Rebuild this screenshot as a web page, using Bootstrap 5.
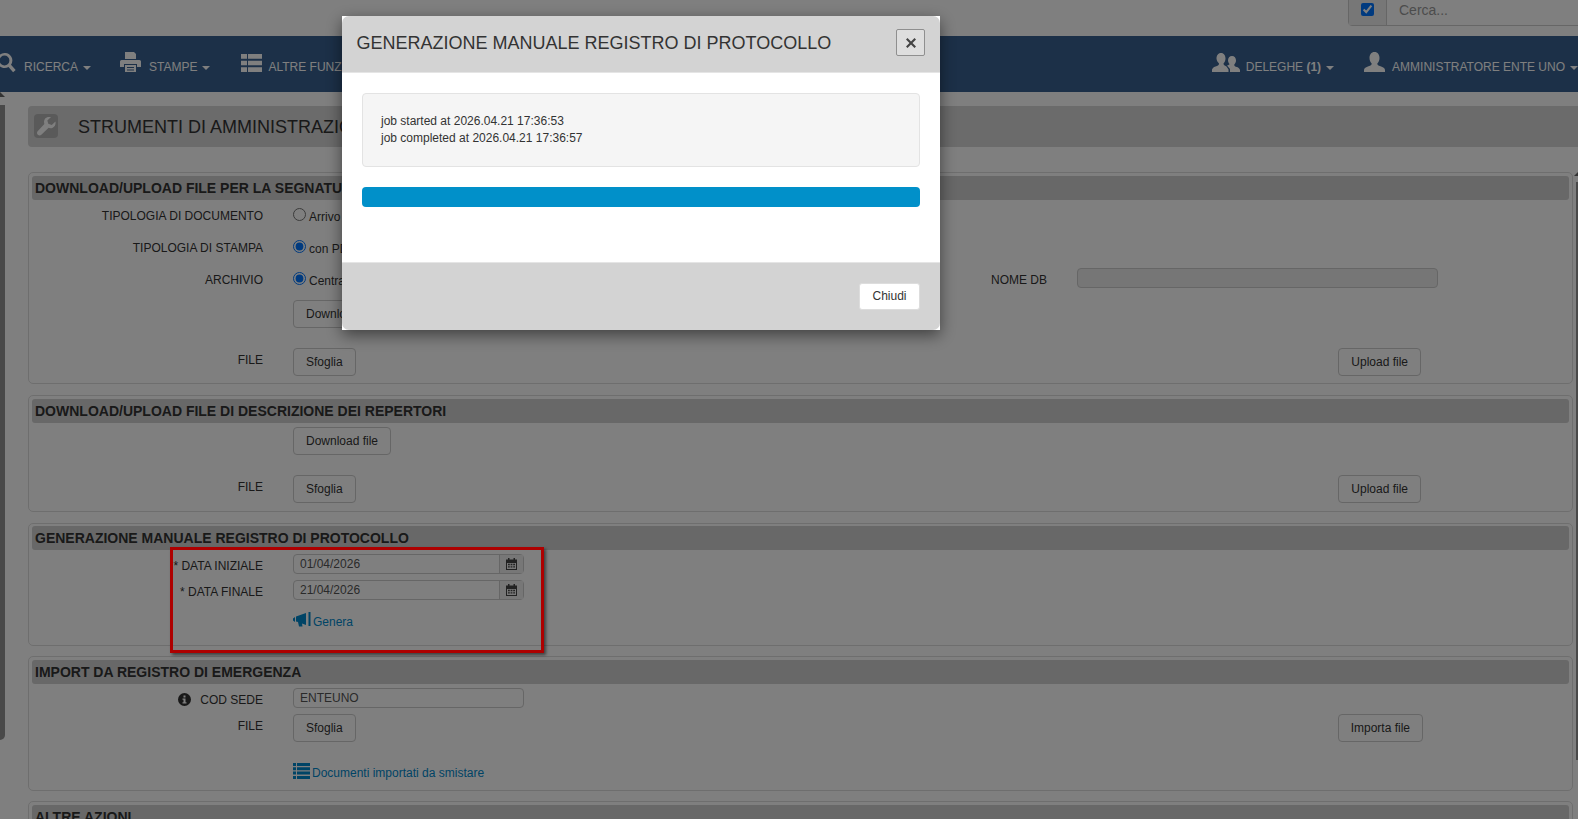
<!DOCTYPE html>
<html lang="it">
<head>
  <meta charset="UTF-8">
  <title>Strumenti di amministrazione</title>
  <link href="https://cdn.jsdelivr.net/npm/bootstrap@5.3.0/dist/css/bootstrap.min.css" rel="stylesheet">
  <style>
    html, body { height: 819px; overflow: hidden; }
    body { font-family: "Liberation Sans", Arial, sans-serif; font-size: 12px; line-height: 17px; color: #333; background: #fff; }
    svg { fill: currentColor; display: block; flex-shrink: 0; }

    /* top strip */
    .top-strip { height: 36px; }
    .search-box { width: 240px; height: 27px; margin-top: -1px; margin-right: -10px; border: 1px solid #ccc; border-radius: 0 0 0 4px; flex-shrink: 0; }
    .search-check { width: 38px; background: #eee; border-right: 1px solid #ccc; padding-top: 3px; padding-left: 12px; }
    .search-check input { width: 13px; height: 13px; margin: 0; display: block; }
    .search-text { padding: 0 0 0 12px; font-size: 14px; line-height: 20px; color: #999; }

    /* blue bar */
    .main-bar { height: 56px; background: #386090; color: #fff; padding: 0; flex-wrap: nowrap; }
    .bar-left { margin-left: -3px; }
    .bar-item { display: flex; align-items: flex-start; color: #fff; white-space: nowrap; padding-top: 16px; margin-right: 29px; }
    .bar-item:last-child { margin-right: 0; }
    .bar-item span { margin-top: 7px; }
    .bar-item svg { margin-right: 8px; }
    .gap-six { margin-left: 2px; }
    .gap-six svg { margin-right: 6px; margin-top: 2px; }
    .gap-five { margin-right: 30px; }
    .gap-five svg { margin-right: 6px; margin-top: 1px; }
    .gap-seven svg { margin-right: 7px; }
    .icon-low svg { margin-top: 1px; }
    .bar-caret { width: 0; height: 0; margin: 14px 0 0 5px; border-top: 4px solid #fff; border-left: 4px solid transparent; border-right: 4px solid transparent; }

    /* page */
    .left-rail { width: 5px; height: 635px; margin-top: 13px; margin-right: 23px; background: #929292; border-radius: 0 0 5px 0; flex-shrink: 0; position: relative; }
    .left-rail::before { content: ""; position: absolute; left: 0; top: -13px; border-bottom: 5px solid #666; border-right: 5px solid transparent; }
    .right-rail { position: absolute; right: 0; top: 182px; width: 2px; height: 578px; background: #929292; }
    .right-rail::before { content: ""; position: absolute; right: 0; top: -10px; border-bottom: 4px solid #666; border-left: 4px solid transparent; }
    .page-head { height: 41px; margin-top: 14px; margin-bottom: 25px; background: #d6d6d6; border-radius: 4px 0 0 4px; padding-left: 6px; font-size: 18px; color: #333; }
    .page-head span { margin-top: 1px; }
    .wrench-box { width: 24px; height: 24px; background: #b4b4b4; border-radius: 4px; color: #fff; margin-right: 20px; margin-top: -1px; }
    .field-box { margin: 0 5px 11px 0; padding: 3px; border: 1px solid #ddd; border-radius: 5px; }
    .box-segn { height: 212px; }
    .box-rep { height: 117px; }
    .box-gen { height: 123px; padding-top: 2px; margin-bottom: 10px; }
    .box-imp { height: 135px; margin-bottom: 10px; }
    .field-title { height: 24px; line-height: 24px; padding-left: 3px; background: #d0d0d0; border-radius: 3px; font-size: 14px; font-weight: 700; color: #333; margin-bottom: 4px; }
    .box-segn .field-title { margin-bottom: 6px; }
    .form-line { display: flex; align-items: flex-start; }
    .line-32 { height: 32px; }
    .line-18 { height: 18px; }
    .line-26 { height: 26px; }
    .line-49 { height: 49px; }
    .line-48 { height: 48px; }
    .line-60 { height: 60px; padding-top: 12px; }
    .line-label { width: 231px; text-align: right; margin-right: 30px; flex-shrink: 0; padding-top: 2px; display: flex; justify-content: flex-end; }
    .label-low { padding-top: 4px; }
    .label-db { width: 120px; }
    .plain-btn { display: inline-block; height: 28px; padding: 4px 12px; font-size: 12px; line-height: 18px; color: #333; background: transparent; border: 1px solid #ccc; border-radius: 4px; }
    .btn-far { margin-left: auto; margin-right: 148px; }
    .btn-far-imp { margin-left: auto; margin-right: 146px; }
    .text-box { height: 20px; border: 1px solid #ccc; border-radius: 4px; padding: 0 6px; line-height: 19px; color: #555; background: #fff; }
    .box-sede { width: 231px; }
    .box-db { width: 361px; margin-top: -2px; margin-right: 131px; background: #ececec; }
    .date-box { width: 231px; height: 20px; display: flex; border: 1px solid #ccc; border-radius: 4px; color: #555; }
    .date-value { flex: 1; padding: 0 6px; line-height: 19px; }
    .date-add { width: 24px; border-left: 1px solid #ccc; background: #eee; color: #444; padding: 3px 0 0 6px; }
    .plain-link { color: #0088cc; text-decoration: none; display: flex; align-items: flex-start; gap: 2px; }
    .plain-link span { margin-top: 2px; }
    .radio-row { display: flex; align-items: flex-start; }
    .radio-row input { width: 13px; height: 13px; margin: 2px 3px 0 0; }
    .radio-row label { margin-top: 3px; }
    .info-mark { margin-top: 1px; margin-right: 9px; }

    /* annotation */
    .red-mark { position: absolute; left: 170px; top: 547px; width: 374px; height: 106px; border: 3px solid #ae0000; box-shadow: 2px 2px 3px rgba(0,0,0,.5); z-index: 1060; }

    /* modal */
    .gen-dialog { width: 598px; max-width: none; margin: 16px 0 0 342px; }
    .gen-dialog .modal-content { border: 0; border-radius: 0; box-shadow: 0 5px 15px rgba(0,0,0,.5); }
    .gen-head { height: 57px; background: #d3d3d3; padding: 0 15px 3px 14.5px; border-bottom: 1px solid #e5e5e5; }
    .gen-head h4 { margin: 0; font-size: 18px; font-weight: 400; color: #333; line-height: 20px; }
    .gen-close { width: 29px; height: 27px; padding: 0; background: #dedede; border: 1px solid #8f8f8f; border-radius: 2px; color: #444; }
    .gen-body { height: 189px; padding: 20px; }
    .job-well { height: 74px; background: #f5f5f5; border: 1px solid #e3e3e3; border-radius: 4px; padding: 19px 18px 19px 18px; margin-bottom: 20px; }
    .job-bar { height: 20px; background: #0190c9; border-radius: 4px; }
    .gen-foot { height: 68px; background: #d3d3d3; border-top: 1px solid #e5e5e5; padding: 20px 20px 0 0; }
    .gen-foot .btn { width: 61px; height: 27px; padding: 0; font-size: 12px; line-height: 25px; color: #333; background: #fff; border: 1px solid #ddd; border-radius: 3px; }
  </style>
</head>
<body>
  <!-- search strip -->
  <div class="top-strip d-flex justify-content-end">
    <div class="search-box d-flex">
      <div class="search-check"><input type="checkbox" checked></div>
      <div class="search-text">Cerca...</div>
    </div>
  </div>

  <!-- menu bar -->
  <nav class="navbar main-bar">
    <div class="d-flex h-100 bar-left">
      <a class="bar-item text-decoration-none icon-low">
        <svg width="19" height="20" viewBox="0 0 19 20"><path d="M7.5 0a7.5 7.5 0 1 0 4 13.9l4.6 5.3 2.6-2.3-4.7-5.2A7.5 7.5 0 0 0 7.5 0zm0 2.600a4.900 4.900 0 1 1 0 9.800 4.900 4.900 0 0 1 0-9.800z"/></svg>
        <span>RICERCA</span><i class="bar-caret"></i>
      </a>
      <a class="bar-item text-decoration-none">
        <svg width="21" height="20" viewBox="0 0 21 20"><path fill-rule="evenodd" d="M5 0h9l2 2v5H5zM1.500 8h18a1.500 1.500 0 0 1 1.500 1.500V15h-4v-3H4v3H0V9.500A1.500 1.500 0 0 1 1.500 8zM5 13h11v7H5zM7 15v1h7v-1zM7 17.500v1h7v-1z"/></svg>
        <span>STAMPE</span><i class="bar-caret"></i>
      </a>
      <a class="bar-item text-decoration-none gap-six">
        <svg width="21" height="18" viewBox="0 0 21 19" preserveAspectRatio="none"><path d="M0 0h6v5H0zM7 0h14v5H7zM0 7h6v5H0zM7 7h14v5H7zM0 14h6v5H0zM7 14h14v5H7z"/></svg>
        <span>ALTRE FUNZIONI</span><i class="bar-caret"></i>
      </a>
    </div>
    <div class="d-flex h-100">
      <a class="bar-item text-decoration-none gap-five">
        <svg width="28" height="19" viewBox="0 0 28 19"><path d="M9 0c3 0 4.500 2.500 4.500 5.500 0 2-1 4-2 5 0 1.500 1 2 3 3l2 3V19H0v-2.500c1-2.500 3-3 5-3.500 1.500-.5 2-1.500 2-2.500-1-1-2.500-3-2.500-5C4.500 2.500 6 0 9 0zM20 3c2.500 0 4 2 4 4.500 0 1.500-.8 3.300-1.800 4.200 0 1.300 1 1.800 2.800 2.300 1.500.5 2.500 1.500 3 3V19H18v-3l-3-3.500c1.500-.5 2.500-1 2.500-1.500-1-1-1.500-2.500-1.500-3.500C16 5 17.500 3 20 3z"/></svg>
        <span>DELEGHE <b>(1)</b></span><i class="bar-caret"></i>
      </a>
      <a class="bar-item text-decoration-none gap-seven">
        <svg width="21" height="20" viewBox="0 0 21 20"><path d="M10.500 0c3.300 0 5 2.700 5 6 0 2.200-1 4.400-2.200 5.500 0 1.500 1 2.200 3.200 2.800 2.500.7 4.500 2 4.500 3.700v2H0v-2c0-1.700 2-3 4.500-3.700 2.200-.6 3.200-1.300 3.200-2.800C6.500 10.400 5.500 8.200 5.500 6c0-3.300 1.700-6 5-6z"/></svg>
        <span>AMMINISTRATORE ENTE UNO</span><i class="bar-caret"></i>
      </a>
    </div>
  </nav>

  <div class="d-flex">
    <div class="left-rail"></div>
    <main class="flex-grow-1">
      <div class="page-head d-flex align-items-center">
        <div class="wrench-box d-flex align-items-center justify-content-center">
          <svg width="19" height="19" viewBox="0 0 18 18"><path d="M17.500 4.200 14 7.500l-3.300-1-.9-3.200L13.300 0C10.800-.6 8 .3 7 2.800c-.5 1.300-.4 2.700 0 3.800L.6 13.500c-.8.9-.8 2.500.2 3.400 1 .9 2.400.9 3.300 0l6.900-6.600c1.200.4 2.700.4 3.900-.2 2.200-1 3.100-3.500 2.600-5.900z"/></svg>
        </div>
        <span>STRUMENTI DI AMMINISTRAZIONE</span>
      </div>

      <section class="field-box box-segn">
        <div class="field-title">DOWNLOAD/UPLOAD FILE PER LA SEGNATURA</div>
        <div class="form-line line-32">
          <div class="line-label">TIPOLOGIA DI DOCUMENTO</div>
          <div class="radio-row"><input type="radio" name="r1"><label>Arrivo</label></div>
        </div>
        <div class="form-line line-32">
          <div class="line-label">TIPOLOGIA DI STAMPA</div>
          <div class="radio-row"><input type="radio" name="r2" checked><label>con PDF</label></div>
        </div>
        <div class="form-line line-18">
          <div class="line-label">ARCHIVIO</div>
          <div class="radio-row flex-grow-1"><input type="radio" name="r3" checked><label>Centrale</label></div>
          <div class="line-label label-db">NOME DB</div>
          <div class="text-box box-db"></div>
        </div>
        <div class="form-line line-60">
          <div class="line-label"></div>
          <button class="plain-btn">Download file</button>
        </div>
        <div class="form-line">
          <div class="line-label label-low">FILE</div>
          <button class="plain-btn">Sfoglia</button>
          <button class="plain-btn btn-far">Upload file</button>
        </div>
      </section>

      <section class="field-box box-rep">
        <div class="field-title">DOWNLOAD/UPLOAD FILE DI DESCRIZIONE DEI REPERTORI</div>
        <div class="form-line line-48">
          <div class="line-label"></div>
          <button class="plain-btn">Download file</button>
        </div>
        <div class="form-line">
          <div class="line-label label-low">FILE</div>
          <button class="plain-btn">Sfoglia</button>
          <button class="plain-btn btn-far">Upload file</button>
        </div>
      </section>

      <section class="field-box box-gen">
        <div class="field-title">GENERAZIONE MANUALE REGISTRO DI PROTOCOLLO</div>
        <div class="form-line line-26">
          <div class="line-label label-low">* DATA INIZIALE</div>
          <div class="date-box"><div class="date-value">01/04/2026</div><div class="date-add"><svg width="11" height="12" viewBox="0 0 11 12"><path d="M2 0h1.500v1.500h4V0H9v1.500h2V12H0V1.500h2zM1 5v6h9V5z"/><path d="M2 5.800h1.800v1.400H2zM4.600 5.800h1.800v1.400H4.600zM7.200 5.800H9v1.400H7.200zM2 8.200h1.800v1.400H2zM4.600 8.200h1.800v1.400H4.600zM7.200 8.200H9v1.400H7.200z"/></svg></div></div>
        </div>
        <div class="form-line line-32">
          <div class="line-label label-low">* DATA FINALE</div>
          <div class="date-box"><div class="date-value">21/04/2026</div><div class="date-add"><svg width="11" height="12" viewBox="0 0 11 12"><path d="M2 0h1.500v1.500h4V0H9v1.500h2V12H0V1.500h2zM1 5v6h9V5z"/><path d="M2 5.800h1.800v1.400H2zM4.600 5.800h1.800v1.400H4.600zM7.200 5.800H9v1.400H7.200zM2 8.200h1.800v1.400H2zM4.600 8.200h1.800v1.400H4.600zM7.200 8.200H9v1.400H7.200z"/></svg></div></div>
        </div>
        <div class="form-line">
          <div class="line-label"></div>
          <a class="plain-link">
            <svg width="18" height="15" viewBox="0 0 18 15"><path d="M0 6.500 2 5v5L0 8.500zM3 4.500 13 1v12l-4-1.500.5 3H6L5 10l-2-.5zM15.500 0h2v14h-2z"/></svg>
            <span>Genera</span>
          </a>
        </div>
      </section>

      <section class="field-box box-imp">
        <div class="field-title">IMPORT DA REGISTRO DI EMERGENZA</div>
        <div class="form-line line-26">
          <div class="line-label label-low">
            <svg class="info-mark" width="13" height="13" viewBox="0 0 13 13"><path fill-rule="evenodd" d="M6.500 0a6.500 6.500 0 1 1 0 13 6.500 6.500 0 0 1 0-13zM5.500 2.500v2h2v-2zM4.500 5.500v1.200h1v2.600h-1v1.200h4V9.300h-1V5.500z"/></svg>
            <span>COD SEDE</span>
          </div>
          <div class="text-box box-sede">ENTEUNO</div>
        </div>
        <div class="form-line line-49">
          <div class="line-label label-low">FILE</div>
          <button class="plain-btn">Sfoglia</button>
          <button class="plain-btn btn-far-imp">Importa file</button>
        </div>
        <div class="form-line">
          <div class="line-label"></div>
          <a class="plain-link">
            <svg width="17" height="16" viewBox="0 0 17 16"><path d="M0 0h3v3H0zM4 0h13v3H4zM0 4.300h3v3H0zM4 4.300h13v3H4zM0 8.600h3v3H0zM4 8.600h13v3H4zM0 13h3v3H0zM4 13h13v3H4z"/></svg>
            <span>Documenti importati da smistare</span>
          </a>
        </div>
      </section>

      <section class="field-box">
        <div class="field-title">ALTRE AZIONI</div>
      </section>
    </main>
  </div>
  <div class="right-rail"></div>

  <div class="red-mark"></div>

  <!-- modal -->
  <div class="modal-backdrop show"></div>
  <div class="modal d-block">
    <div class="modal-dialog gen-dialog">
      <div class="modal-content">
        <div class="modal-header gen-head">
          <h4>GENERAZIONE MANUALE REGISTRO DI PROTOCOLLO</h4>
          <button class="gen-close d-flex align-items-center justify-content-center">
            <svg width="10" height="10" viewBox="0 0 10 10"><path d="M1.500 0 5 3.500 8.500 0 10 1.500 6.500 5 10 8.500 8.500 10 5 6.500 1.500 10 0 8.500 3.500 5 0 1.500z"/></svg>
          </button>
        </div>
        <div class="modal-body gen-body">
          <div class="job-well">job started at 2026.04.21 17:36:53<br>job completed at 2026.04.21 17:36:57</div>
          <div class="job-bar"></div>
        </div>
        <div class="modal-footer gen-foot d-block text-end">
          <button class="btn m-0">Chiudi</button>
        </div>
      </div>
    </div>
  </div>

  <script src="https://cdn.jsdelivr.net/npm/bootstrap@5.3.0/dist/js/bootstrap.bundle.min.js"></script>
</body>
</html>
